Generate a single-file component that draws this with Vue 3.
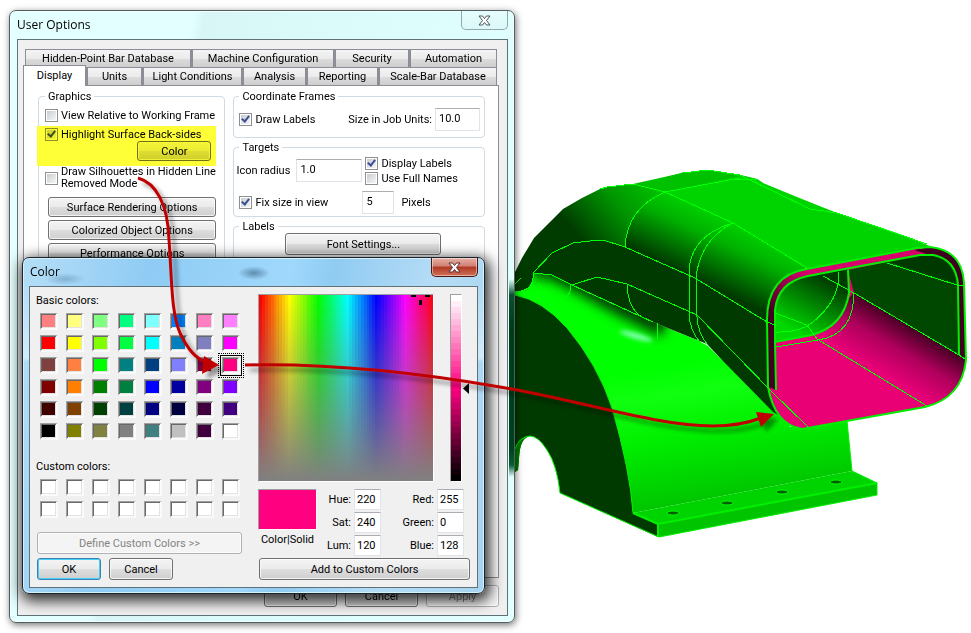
<script setup>
import { ref } from 'vue'

const backTabs = ['Hidden-Point Bar Database', 'Machine Configuration', 'Security', 'Automation']
const frontTabs = ['Display', 'Units', 'Light Conditions', 'Analysis', 'Reporting', 'Scale-Bar Database']
const activeTab = ref('Display')

const basicColors = [
  '#ff8080', '#ffff80', '#80ff80', '#00ff80', '#80ffff', '#0080ff', '#ff80c0', '#ff80ff',
  '#ff0000', '#ffff00', '#80ff00', '#00ff40', '#00ffff', '#0080c0', '#8080c0', '#ff00ff',
  '#804040', '#ff8040', '#00ff00', '#008080', '#004080', '#8080ff', '#800040', '#ff0080',
  '#800000', '#ff8000', '#008000', '#008040', '#0000ff', '#0000a0', '#800080', '#8000ff',
  '#400000', '#804000', '#004000', '#004040', '#000080', '#000040', '#400040', '#400080',
  '#000000', '#808000', '#808040', '#808080', '#408080', '#c0c0c0', '#400040', '#ffffff'
]
const selected = ref('#ff0080')

const hueColumns = Array.from({ length: 60 }, (_, i) => `hsl(${i * 6} 100% 50%)`)
const lumSteps = Array.from({ length: 31 }, (_, i) => `hsl(330 100% ${100 - (i * 100) / 30}%)`)

const fields = [
  { id: 'hue', label: 'Hue:', value: '220' },
  { id: 'red', label: 'Red:', value: '255' },
  { id: 'sat', label: 'Sat:', value: '240' },
  { id: 'green', label: 'Green:', value: '0' },
  { id: 'lum', label: 'Lum:', value: '120' },
  { id: 'blue', label: 'Blue:', value: '128' }
]
</script>

<template>
  <main class="desktop">
    <!-- CAD model -->
    <svg class="model" width="971" height="633" viewBox="0 0 971 633" aria-hidden="true">
      <defs>
        <linearGradient id="cap" gradientUnits="userSpaceOnUse" x1="665" y1="180" x2="588" y2="247">
          <stop offset="0" stop-color="#00cc00" />
          <stop offset=".5" stop-color="#009600" />
          <stop offset="1" stop-color="#003c00" />
        </linearGradient>
        <linearGradient id="shoulder" gradientUnits="userSpaceOnUse" x1="704" y1="208" x2="675" y2="268">
          <stop offset="0" stop-color="#00d200" />
          <stop offset=".35" stop-color="#00b000" />
          <stop offset="1" stop-color="#003a00" />
        </linearGradient>
        <linearGradient id="base" gradientUnits="userSpaceOnUse" x1="690" y1="300" x2="722" y2="500">
          <stop offset="0" stop-color="#00ff00" />
          <stop offset=".3" stop-color="#00ff00" />
          <stop offset=".45" stop-color="#10ff10" />
          <stop offset=".65" stop-color="#00f000" />
          <stop offset="1" stop-color="#00c400" />
        </linearGradient>
        <linearGradient id="bore" gradientUnits="userSpaceOnUse" x1="826" y1="278" x2="796" y2="332">
          <stop offset="0" stop-color="#003a00" />
          <stop offset=".3" stop-color="#006a00" />
          <stop offset="1" stop-color="#00d800" />
        </linearGradient>
        <linearGradient id="back" gradientUnits="userSpaceOnUse" x1="892" y1="312" x2="862" y2="362">
          <stop offset="0" stop-color="#3c001e" />
          <stop offset=".5" stop-color="#b0005c" />
          <stop offset="1" stop-color="#e80078" />
        </linearGradient>
        <linearGradient id="rim" gradientUnits="userSpaceOnUse" x1="768" y1="310" x2="806" y2="272">
          <stop offset="0" stop-color="#400020" />
          <stop offset="1" stop-color="#d8006c" />
        </linearGradient>
        <filter id="soft" x="-30%" y="-30%" width="160%" height="160%"><feGaussianBlur stdDeviation="6" /></filter>
        <filter id="soft2" x="-50%" y="-100%" width="200%" height="300%"><feGaussianBlur stdDeviation="2" /></filter>
        <clipPath id="baseClip">
          <path d="M515 292L533 273L552 276L572 285L653 322L697 340L708 346L722 360L773 412L790 427L847 421L852 471L633 513Q630 470 612 408Q598 365 567 328Q542 300 515 295Z" />
        </clipPath>
      </defs>

      <!-- outer shell -->
      <path fill="url(#cap)" d="M515 272L522 258L534 238L550 222L563 209L582 198L600 189L607 187L633 184L682 173L708 170L740 175L757 179L763 183L665 192L650 215L640 255L700 290L560 290L515 292Z" />
      <path fill="url(#shoulder)" d="M665 192L733 223L807 268Q768 278 767 322L695 279L625 247Q626 210 665 192Z" />
      <path fill="#00d400" d="M665 192L640 184L682 173L708 170L740 175L757 179L763 183L797 197L837 213L897 233L930 246L917 249L807 269L733 223Z" />
      <path fill="#00b400" d="M640 184L682 173L708 170L740 176L665 192Z" opacity=".6" />

      <!-- flared base -->
      <path fill="url(#base)" d="M515 292L533 273L552 276L572 285L653 322L697 340L708 346L722 360L768 390L790 427L847 421L852 471L633 513Q630 470 612 408Q598 365 567 328Q542 300 515 295Z" />
      <g clip-path="url(#baseClip)">
        <path fill="none" stroke="#003c00" stroke-width="19" filter="url(#soft)" d="M533 268L552 270L580 284L620 306L665 328" />
        <ellipse cx="636" cy="336" rx="17" ry="3" fill="#80ffb0" transform="rotate(16 636 336)" filter="url(#soft2)" />
      </g>
      <path fill="#003a00" d="M533 273L552 253L573 243L590 241L603 240L625 247L695 278L767 322L770 387L780 416L773 412L722 360L707 344L653 322L572 285L552 275Z" />
      <path fill="#003a00" d="M515 274L533 264V280L527 290L515 292Z" />

      <!-- arch face -->
      <path fill="#003a00" d="M515 295Q542 300 567 328Q598 365 612 408Q630 470 633 513L658 524V537L560 493Q557 465 547 450Q538 436 530 436Q520 437 519 458L518 470L515 472Z" />
      <path fill="#007a00" d="M515 448Q520 436 530 436Q520 438 519 458L518 470L515 472Z" />

      <!-- mounting flange -->
      <path fill="#00d400" d="M633 513L852 471L877 483L658 524Z" />
      <path fill="#00c400" d="M658 524L877 483V495L659 537Z" />
      <g fill="#006000" stroke="#00ff00" stroke-width="1">
        <ellipse cx="673" cy="513" rx="6" ry="2" />
        <ellipse cx="727" cy="503" rx="6" ry="2" />
        <ellipse cx="782" cy="492" rx="6" ry="2" />
        <ellipse cx="836" cy="482" rx="6" ry="2" />
      </g>

      <!-- opening -->
      <path fill="#e80074" d="M767 320Q767 275 807 269L930 247Q962 250 964 283L966 360Q962 398 925 407L802 429Q775 425 768 387Z" />
      <path fill="url(#back)" d="M817 338L854 292L959 355L966 360Q962 398 925 407Z" />
      <path fill="#004800" d="M848 270L920 255L933 255Q955 260 958 285L959 355L854 293Z" />
      <path fill="#003000" d="M890 262L920 255L933 255Q950 260 957 283Z" opacity=".6" />
      <path fill="url(#bore)" d="M775 342V310Q778 284 808 276L848 269L849 293Q842 325 812 335Z" />
      <path fill="url(#rim)" d="M767 340V320Q767 275 807 269L920 248V255L808 276Q776 282 775 310V342L776 390L768 387Z" />
      <path fill="#400020" d="M914 250L930 247Q962 250 964 283L966 360L959 355L958 285Q955 258 933 255L926 254Z" />

      <!-- thick edges -->
      <g fill="none" stroke="#00f000" stroke-width="2">
        <path d="M768 387L767 320Q767 275 807 269L917 248L930 247Q962 250 964 283L966 360Q962 398 925 407L802 429Q775 425 768 387Z" />
        <path d="M776 390L775 342V310Q778 282 808 276L850 268L920 255H933Q956 259 958 285L959 355" />
        <path d="M848 270L849 293Q844 326 812 335L775 342" />
        <path d="M847 421L852 471L877 483V495L659 537L560 493" stroke-width="1" />
        <path d="M658 537V524L877 483M633 513L658 524" />
        <path d="M560 493Q557 465 547 450Q538 436 530 436Q519 437 515 449" stroke-width="1" />
        <path d="M515 295Q542 300 567 328Q598 365 612 408Q630 470 633 513" stroke-width="1" />
      </g>

      <!-- thin edges -->
      <g fill="none" stroke="#00ff00" stroke-width="1" shape-rendering="crispEdges">
        <path d="M600 189L607 187L633 184L665 192L733 223L807 268" />
        <path d="M665 192L740 178M682 173L708 170L740 175L810 209L837 213L927 244M730 179L757 179" />
        <path d="M665 192Q627 208 625 247" />
        <path d="M533 273L552 253L573 243L590 241L603 240L625 247L695 278L767 322" />
        <path d="M533 273L552 275L572 285L653 322M572 285L597 277L627 284L697 315L770 390L809 428" />
        <path d="M627 284Q628 312 646 319M533 273Q535 291 515 292L540 293L560 302M571 285Q571 297 559 301" />
        <path d="M733 223Q690 236 689 272V313Q690 332 700 342" />
        <path d="M733 223Q700 240 696 278L697 317Q698 334 708 345" />
        <path d="M657 323V339M515 284L521 278" />
        <path d="M839 272Q840 300 813 322Q800 333 775 332M775 313L807 325L817 339L927 406" />
        <path d="M823 276L854 293L959 355L965 359M854 292Q854 335 818 340L776 347" />
        <path d="M887 263L957 285H964M767 322L775 325" />
      </g>
    </svg>

    <!-- User Options window -->
    <section class="window options" aria-label="User Options">
      <header class="titlebar">
        <h1>User Options</h1>
        <button class="close ghost" type="button" aria-label="Close">
          <svg width="13" height="11" viewBox="0 0 13 11"><path d="M1 1H4.500L6.500 3.500L8.500 1H12L8.500 5.500L12 10H8.500L6.500 7.500L4.500 10H1L4.500 5.500Z" fill="#fff" stroke="#4a5558" /></svg>
        </button>
      </header>
      <div class="client">
        <nav class="tabs back-row">
          <button v-for="t in backTabs" :key="t" class="tab" type="button">{{ t }}</button>
        </nav>
        <nav class="tabs front-row">
          <button v-for="t in frontTabs" :key="t" class="tab" :class="{ active: t === activeTab }" type="button" @click="activeTab = t">{{ t }}</button>
        </nav>
        <div class="pane">
          <fieldset class="group graphics">
            <legend>Graphics</legend>
            <label class="check"><input type="checkbox" />View Relative to Working Frame</label>
            <div class="marked">
              <label class="check"><input type="checkbox" checked />Highlight Surface Back-sides</label>
              <button class="btn" type="button">Color</button>
            </div>
            <label class="check two-line"><input type="checkbox" /><span>Draw Silhouettes in Hidden Line<br />Removed Mode</span></label>
            <div class="stack">
              <button class="btn" type="button">Surface Rendering Options</button>
              <button class="btn" type="button">Colorized Object Options</button>
              <button class="btn" type="button">Performance Options</button>
            </div>
          </fieldset>
          <div class="column">
            <fieldset class="group frames">
              <legend>Coordinate Frames</legend>
              <div class="row">
                <label class="check"><input type="checkbox" checked />Draw Labels</label>
                <label class="push" for="job-size">Size in Job Units:</label>
                <input id="job-size" class="text job" value="10.0" />
              </div>
            </fieldset>
            <fieldset class="group targets">
              <legend>Targets</legend>
              <div class="target-grid">
                <label for="radius">Icon radius</label>
                <input id="radius" class="text" value="1.0" />
                <div class="pair">
                  <label class="check"><input type="checkbox" checked />Display Labels</label>
                  <label class="check"><input type="checkbox" />Use Full Names</label>
                </div>
                <label class="check fix"><input type="checkbox" checked />Fix size in view</label>
                <div class="row">
                  <input id="px" class="text px" value="5" />
                  <label for="px">Pixels</label>
                </div>
              </div>
            </fieldset>
            <fieldset class="group labels">
              <legend>Labels</legend>
              <button class="btn font" type="button">Font Settings...</button>
            </fieldset>
          </div>
        </div>
        <footer class="actions">
          <button class="btn" type="button">OK</button>
          <button class="btn" type="button">Cancel</button>
          <button class="btn" type="button" disabled>Apply</button>
        </footer>
      </div>
    </section>

    <!-- Color dialog -->
    <section class="window color" role="dialog" aria-label="Color">
      <header class="titlebar">
        <h1>Color</h1>
        <button class="close red" type="button" aria-label="Close">
          <svg width="13" height="11" viewBox="0 0 13 11"><path d="M1 1H4.500L6.500 3.500L8.500 1H12L8.500 5.500L12 10H8.500L6.500 7.500L4.500 10H1L4.500 5.500Z" fill="#fff" stroke="#5a3030" /></svg>
        </button>
      </header>
      <div class="client">
        <div class="palette">
          <p>Basic colors:</p>
          <div class="swatches">
            <button
              v-for="(c, i) in basicColors"
              :key="i"
              class="swatch"
              :class="{ chosen: c === selected }"
              :style="{ backgroundColor: c }"
              :aria-label="c"
              type="button"
              @click="selected = c"
            ></button>
          </div>
          <p class="custom">Custom colors:</p>
          <div class="swatches">
            <button v-for="n in 16" :key="n" class="swatch blank" :aria-label="'Custom ' + n" type="button"></button>
          </div>
          <button class="btn define" type="button" disabled>Define Custom Colors &gt;&gt;</button>
          <div class="row confirm">
            <button class="btn primary" type="button">OK</button>
            <button class="btn" type="button">Cancel</button>
          </div>
        </div>
        <div class="mixer">
          <div class="pickers">
            <div class="spectrum">
              <i v-for="h in hueColumns" :key="h" :style="{ backgroundColor: h }"></i>
              <svg class="cross" width="20" height="12" viewBox="0 0 20 12"><path d="M0 0H5V2H0ZM14 0H19V2H14ZM8 5H11V10H8Z" /></svg>
            </div>
            <div class="lum">
              <i v-for="l in lumSteps" :key="l" :style="{ backgroundColor: l }"></i>
              <svg class="marker" width="6" height="11" viewBox="0 0 6 11"><path d="M6 0V11L0 5.500Z" /></svg>
            </div>
          </div>
          <div class="details">
            <div class="preview">
              <div class="chip" :style="{ backgroundColor: selected }"></div>
              <span>Color|Solid</span>
            </div>
            <div class="fields">
              <template v-for="f in fields" :key="f.id">
                <label :for="f.id">{{ f.label }}</label>
                <input :id="f.id" class="text" :value="f.value" />
              </template>
            </div>
          </div>
          <button class="btn add" type="button">Add to Custom Colors</button>
        </div>
      </div>
    </section>

    <!-- callout arrows -->
    <svg class="callouts" width="971" height="633" viewBox="0 0 971 633" aria-hidden="true">
      <defs>
        <filter id="drop" filterUnits="userSpaceOnUse" x="0" y="0" width="971" height="633">
          <feDropShadow dx="5" dy="5" stdDeviation="2" flood-color="#000" flood-opacity=".4" />
        </filter>
      </defs>
      <g filter="url(#drop)" fill="#c00000">
        <path d="M138 178C156 183 168 204 169 240C172 280 171 312 180 333C188 350 196 359 208 363" fill="none" stroke="#c00000" stroke-width="3" />
        <path d="M204 356L219 365L202 374Z" />
      </g>
      <g filter="url(#drop)" fill="#c00000">
        <path d="M245 365C330 363 420 373 500 387C580 400 650 425 713 426Q740 426 761 418" fill="none" stroke="#c00000" stroke-width="3" />
        <path d="M756 412L774 414L761 427Z" />
      </g>
    </svg>
  </main>
</template>

<style>
body {
  background: #fff;
}
</style>

<style scoped>
.desktop {
  position: relative;
  min-height: 100vh;
  overflow: hidden;
  font: 11px/13px Roboto, "Liberation Sans", sans-serif;
  color: #000;
}
.desktop *,
.desktop *::before,
.desktop *::after {
  box-sizing: border-box;
}
.model,
.callouts {
  position: absolute;
  top: 0;
  left: 0;
}
.callouts {
  pointer-events: none;
}
button,
input {
  font: inherit;
  color: inherit;
  margin: 0;
}
p {
  margin: 0;
}

/* windows */
.window {
  position: absolute;
  display: flex;
  flex-direction: column;
  border-radius: 7px;
}
.options {
  left: 9px;
  top: 10px;
  width: 506px;
  height: 613px;
  padding: 0 6px 6px 7px;
  border: 1px solid #50605f;
  background: linear-gradient(100deg, #e4ffff 0, #e4ffff 30%, #d8f6f6 32%, #dcfcfc 60%, #e2ffff 100%);
  box-shadow: inset 0 0 0 1px #f4ffff, 1px 2px 7px rgba(0, 0, 0, .55);
}
/* the model showing dimly through the glass frame */
.options::after {
  content: "";
  position: absolute;
  right: 0;
  top: 268px;
  width: 5px;
  height: 198px;
  background: linear-gradient(rgba(0, 64, 30, 0), #0a5030 16px, #003c18 50px, #004020 170px, #0b5a34 186px, rgba(0, 64, 30, 0));
}
.color {
  left: 22px;
  top: 257px;
  width: 463px;
  height: 337px;
  padding: 0 6px 6px;
  border: 1px solid #18242e;
  background:
    radial-gradient(ellipse 20px 6px at 42px 21px, rgba(50, 90, 120, .3), transparent),
    radial-gradient(ellipse 16px 7px at 231px 15px, rgba(30, 70, 100, .5), transparent),
    linear-gradient(to bottom, rgba(220, 240, 252, 0) 25px, rgba(225, 242, 252, .7) 100px, rgba(220, 240, 252, 0) 104px),
    linear-gradient(100deg, #b4def7 0, #8fcbf4 25%, #a0d8fc 52%, #90cbf2 60%, #b5dcf5 80%, #a6d3f0 100%);
  box-shadow: inset 0 0 0 1px #d8effc, 2px 4px 14px 3px rgba(0, 0, 0, .8);
}
.titlebar {
  display: flex;
  align-items: flex-start;
  justify-content: space-between;
  flex: none;
  height: 28px;
}
.titlebar h1 {
  margin: 0;
  font: 12px/28px "Open Sans", "Noto Sans", sans-serif;
}
.color .titlebar h1 {
  padding-left: 1px;
}
.close {
  display: flex;
  align-items: center;
  justify-content: center;
  width: 47px;
  height: 19px;
  padding: 0;
  border-top: 0;
}
.ghost {
  border: 1px solid #92a8aa;
  border-top: 0;
  border-radius: 0 0 5px 5px;
  background: linear-gradient(#e6fdfd, #dcf8f8);
}
.red {
  border: 1px solid #4a1810;
  border-top: 0;
  border-radius: 0 0 5px 5px;
  background: linear-gradient(#e8b0a4 0, #d08074 45%, #b03824 50%, #d07058 100%);
  box-shadow: inset 0 0 0 1px rgba(255, 255, 255, .45);
}
.client {
  display: flex;
  flex: 1;
  background: #f0f0f0;
  border: 1px solid #5f7376;
}
.options .client {
  flex-direction: column;
  padding: 9px 8px 8px 5px;
}

/* tabs */
.tabs {
  display: grid;
  margin: 0 2px;
}
.back-row {
  grid-template-columns: 166fr 143fr 75fr 88fr;
}
.front-row {
  grid-template-columns: 61fr 56fr 100fr 64fr 72fr 119fr;
}
.tab {
  height: 18px;
  padding: 0;
  border: 1px solid #8c8e97;
  border-left-width: 2px;
  border-bottom: 0;
  background: linear-gradient(#f4f4f4, #ebebeb 50%, #dcdcdc 52%, #cecece);
  white-space: nowrap;
}
.tab:first-child {
  border-left-width: 1px;
}
.tab.active {
  z-index: 1;
  height: 21px;
  margin: -2px 0 -1px -2px;
  padding-bottom: 2px;
  background: #fff;
}
.pane {
  display: grid;
  grid-template-columns: 187fr 251fr;
  gap: 8px;
  flex: 1;
  padding: 4px 13px 9px 14px;
  background: #fff;
  border: 1px solid #8c8e97;
}
.column {
  display: flex;
  flex-direction: column;
  gap: 3px;
}

/* groups */
.group {
  min-width: 0;
  margin: 0;
  padding: 0 4px 6px 5px;
  border: 1px solid #d0dae2;
  border-radius: 4px;
}
.group legend {
  padding: 0 3px;
}
.graphics {
  padding: 5px 8px 0 6px;
}
.frames {
  padding-top: 5px;
}
.targets {
  padding: 2px 4px 2px 2px;
}
.targets legend {
  margin-left: 3px;
}
.labels {
  flex: 1;
}
.row {
  display: flex;
  align-items: center;
}
.push {
  margin-left: auto;
  margin-right: 3px;
}
.check {
  display: flex;
  align-items: center;
  gap: 3px;
  height: 14px;
  white-space: nowrap;
}
.check input {
  appearance: none;
  flex: none;
  width: 13px;
  height: 13px;
  border: 1px solid #8e8f8f;
  background: linear-gradient(135deg, #c8ccd0, #f6f6f6) content-box #f4f4f4;
  padding: 1px;
}
.check input:checked {
  position: relative;
}
.check input:checked::after {
  content: "";
  position: absolute;
  left: 3px;
  top: 0;
  width: 5px;
  height: 8px;
  border: solid #3c4f94;
  border-width: 0 2px 2px 0;
  transform: rotate(38deg);
}
.marked {
  position: relative;
  display: flex;
  flex-direction: column;
  margin: 4px 0 0 -8px;
  padding: 1px 5px 5px 8px;
  background: #fff;
}
.marked::after {
  content: "";
  position: absolute;
  inset: 0;
  background: #ffff38;
  mix-blend-mode: multiply;
  pointer-events: none;
}
.marked .btn {
  align-self: flex-end;
  width: 74px;
  height: 20px;
}
.check.two-line {
  height: 24px;
  line-height: 12px;
}
.stack {
  display: grid;
  gap: 3px;
  margin: 7px 0 0 3px;
}
.stack .btn {
  height: 20px;
}
.text {
  width: 100%;
  min-width: 0;
  height: 23px;
  padding: 0 3px 3px;
  border: 1px solid #e0e4ea;
  border-top-color: #abadb3;
  border-radius: 1px;
  background: #fff;
}
.job {
  width: 45px;
}
.target-grid {
  display: grid;
  grid-template-columns: 60px 66px 1fr;
  align-items: center;
  row-gap: 6px;
}
.pair {
  padding-left: 3px;
  display: grid;
  gap: 1px;
}
.fix {
  grid-column: span 2;
  margin-left: 3px;
}
.px {
  width: 32px;
  margin-right: 7px;
}
.font {
  width: 156px;
  margin-left: 46px;
}

/* push buttons */
.btn {
  height: 22px;
  padding: 0;
  border: 1px solid #707070;
  border-radius: 3px;
  background: linear-gradient(#f4f4f4, #ebebeb 48%, #dddddd 52%, #cfcfcf);
  box-shadow: inset 0 0 0 1px rgba(255, 255, 255, .7);
  white-space: nowrap;
}
.btn:disabled {
  border-color: #adb2b5;
  background: #f4f4f4;
  color: #838383;
}
.primary {
  border-color: #3c7fb1;
  box-shadow: inset 0 0 0 1px #48d0f4;
}
.actions {
  display: flex;
  justify-content: flex-end;
  gap: 8px;
  padding-top: 7px;
}
.actions .btn {
  width: 73px;
}

/* color dialog */
.color .client {
  gap: 16px;
  padding: 7px 7px 7px 7px;
}
.palette {
  display: flex;
  flex-direction: column;
  width: 205px;
}
.palette p {
  margin: 0 0 6px -1px;
}
.palette .custom {
  margin-top: 20px;
}
.swatches {
  display: grid;
  grid-template-columns: repeat(8, 18px);
  gap: 5px 8px;
  padding-left: 3px;
}
.swatch {
  height: 17px;
  padding: 0;
  border: solid;
  border-width: 1px 2px 2px 1px;
  border-color: #a0a0a0 #fafafa #fafafa #a0a0a0;
  border-radius: 0;
  box-shadow: inset 1px 1px 0 #696969, inset -1px -1px 0 #e3e3e3;
  background-clip: padding-box;
}
.blank {
  background-color: #fff;
}
.chosen {
  position: relative;
  outline: 1px solid #000;
  outline-offset: 1px;
}
.chosen::after {
  content: "";
  position: absolute;
  inset: -5px -6px -6px -5px;
  border: 1px dotted #000;
}
.define {
  margin-top: 14px;
}
.confirm {
  gap: 8px;
  margin-top: 4px;
}
.confirm .btn {
  width: 64px;
}
.mixer {
  display: flex;
  flex-direction: column;
  flex: 1;
}
.pickers {
  display: flex;
  gap: 16px;
  height: 188px;
}
.spectrum {
  position: relative;
  display: flex;
  width: 176px;
  border: 1px solid #a0a0a0;
  border-right-color: #fff;
  border-bottom-color: #fff;
}
.spectrum i {
  flex: 1;
}
.spectrum::after {
  content: "";
  position: absolute;
  inset: 0;
  background: linear-gradient(rgba(128, 128, 128, 0), #808080);
}
.cross {
  position: absolute;
  z-index: 1;
  left: 152px;
  top: 0;
}
.lum {
  position: relative;
  display: flex;
  flex-direction: column;
  width: 12px;
  border: 1px solid #a0a0a0;
  border-right-color: #fff;
  border-bottom-color: #fff;
}
.lum i {
  flex: 1;
}
.marker {
  position: absolute;
  left: 12px;
  top: 88px;
}
.details {
  display: flex;
  margin-top: 7px;
}
.preview {
  width: 59px;
  text-align: center;
}
.chip {
  height: 41px;
  margin-bottom: 3px;
  border: 1px solid #a0a0a0;
  border-right-color: #fff;
  border-bottom-color: #fff;
}
.fields {
  display: grid;
  grid-template-columns: 34px 27px 50px 27px;
  gap: 2px 3px;
  align-items: center;
  text-align: right;
}
.fields .text {
  height: 21px;
  padding: 0 2px 1px;
}
.add {
  margin: auto 0 0 1px;
}
</style>
